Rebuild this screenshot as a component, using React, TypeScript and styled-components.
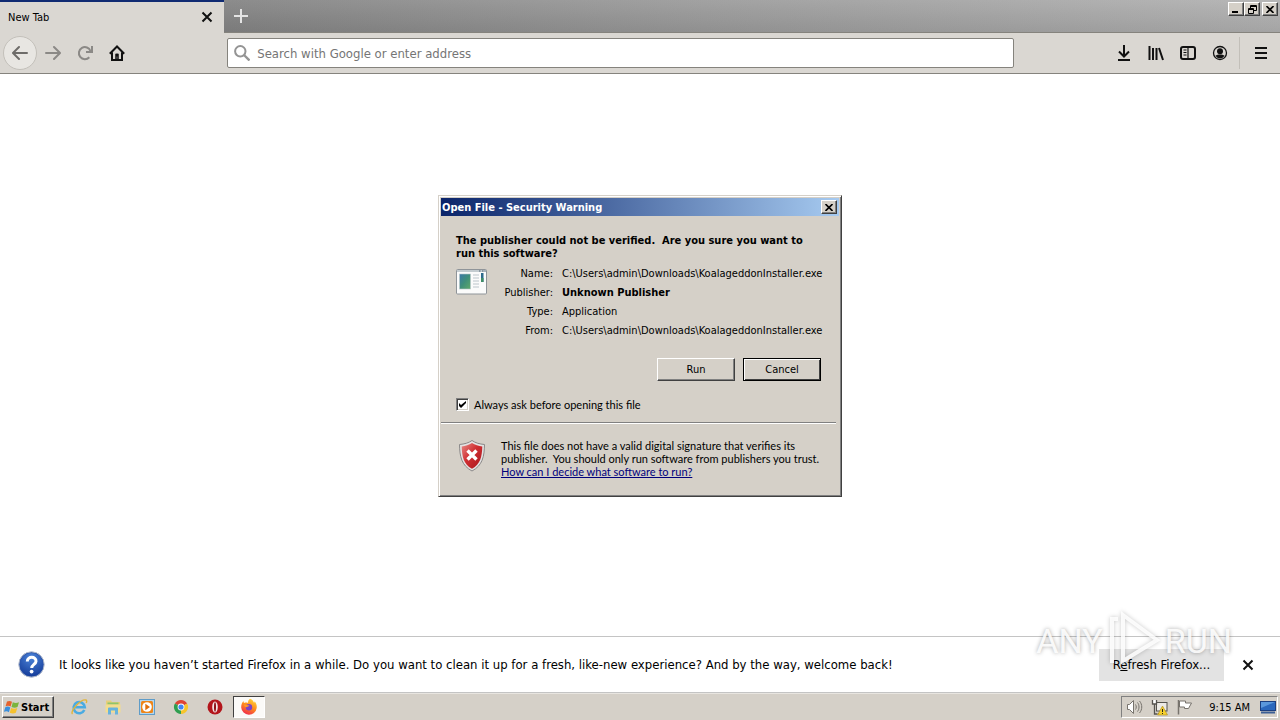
import React from "react";
import styled, { createGlobalStyle, css } from "styled-components";

const ui = '"DejaVu Sans Condensed", "DejaVu Sans", sans-serif';
const narrow = 'Lato, Arial, sans-serif';
const face = "#d5d0c8";
const ink = "#111";

const GlobalStyle = createGlobalStyle`
  * { box-sizing: border-box; }
  body { margin: 0; background: #fff; color: #000; font-family: ${ui}; font-size: 11px; }
  button, input { font: inherit; color: inherit; margin: 0; padding: 0; }
  h1, h2, p, dl, dd { margin: 0; }
  svg { display: block; flex: none; }
`;

const raised = css`
  border: 1px solid;
  border-color: #fff #404040 #404040 #fff;
  box-shadow: inset -1px -1px #808080;
  background: ${face};
`;

const Screen = styled.div`
  position: relative;
  display: flex;
  flex-direction: column;
  min-height: 100vh;
`;

const TabStrip = styled.header`
  display: flex;
  align-items: flex-start;
  height: 33px;
  background:
    linear-gradient(rgba(255, 255, 255, 0.06), rgba(0, 0, 0, 0.08)),
    linear-gradient(90deg, #858585 18%, #9c9c9c 55%, #b2b2b2 100%);
  border-bottom: 1px solid #85837d;
`;

const Tab = styled.div`
  display: flex;
  align-items: center;
  justify-content: space-between;
  width: 224px;
  height: 33px;
  padding: 0 9px 1px 8px;
  border-top: 2px solid #0f2a72;
  background: #dad7d2;
`;

const PlainButton = styled.button<{ $w?: number; $h?: number }>`
  display: flex;
  align-items: center;
  justify-content: center;
  flex: none;
  width: ${(p) => p.$w ?? 32}px;
  height: ${(p) => p.$h ?? 32}px;
  border: 0;
  background: none;
  color: ${ink};
`;

const WindowButtons = styled.div`
  display: flex;
  margin: 2px 2px 0 auto;
`;

const BevelButton = styled.button<{ $gap?: boolean }>`
  ${raised}
  display: flex;
  align-items: center;
  justify-content: center;
  width: 16px;
  height: 14px;
  margin-left: ${(p) => (p.$gap ? 2 : 0)}px;
`;

const Toolbar = styled.nav`
  display: flex;
  align-items: center;
  height: 41px;
  padding: 0 3px;
  background: #dad7d2;
  border-bottom: 1px solid #85837d;
`;

const BackButton = styled(PlainButton)`
  border: 1px solid #c3c0ba;
  border-radius: 50%;
  background: #e8e6e2;
  color: #6e6c69;
`;

const Spacer = styled.div`
  flex: 96 1 0;
`;

const UrlBar = styled.label`
  display: flex;
  align-items: center;
  gap: 7px;
  flex: 787 1 0;
  height: 30px;
  padding: 0 6px;
  border: 1px solid #85837d;
  border-radius: 2px;
  background: #fff;
  color: #949494;
`;

const UrlInput = styled.input`
  flex: 1;
  min-width: 0;
  border: 0;
  outline: 0;
  background: none;
  font-size: 13px;
  &::placeholder { color: #757575; opacity: 1; }
`;

const ToolSeparator = styled.div`
  width: 1px;
  height: 32px;
  margin: 0 5px 0 3px;
  background: #c2bfb9;
`;

const Page = styled.main`
  display: flex;
  flex: 1;
  align-items: center;
  justify-content: center;
  padding-bottom: 18px;
`;

const Dialog = styled.section`
  width: 404px;
  max-width: 100%;
  padding: 1px;
  border: 1px solid;
  border-color: #d5d0c8 #404040 #404040 #d5d0c8;
  box-shadow: inset 1px 1px #fff, inset -1px -1px #808080;
  background: ${face};
  line-height: 13px;
`;

const TitleBar = styled.div`
  display: flex;
  align-items: center;
  justify-content: space-between;
  height: 18px;
  margin: 1px;
  padding: 0 2px 0 1px;
  background: linear-gradient(90deg, #0a246a, #a6caf0);
  color: #fff;
`;

const Title = styled.h1`
  font-size: 11px;
  font-weight: bold;
`;

const DialogBody = styled.div`
  padding: 17px 19px 10px 16px;
`;

const Question = styled.h2`
  font-size: 11px;
  font-weight: bold;
  line-height: 13px;
  white-space: pre-wrap;
`;

const Details = styled.div`
  display: flex;
  gap: 14px;
  margin-top: 7px;
`;

const DetailList = styled.dl`
  display: grid;
  grid-template-columns: 52px auto;
  gap: 6px 9px;
`;

const Term = styled.dt`
  text-align: right;
`;

const Value = styled.dd<{ $bold?: boolean }>`
  font-weight: ${(p) => (p.$bold ? "bold" : "normal")};
  white-space: nowrap;
`;

const Actions = styled.div`
  display: flex;
  justify-content: flex-end;
  gap: 8px;
  margin-top: 21px;
`;

const DialogButton = styled.button<{ $primary?: boolean }>`
  ${raised}
  width: 78px;
  height: 23px;
  ${(p) =>
    p.$primary &&
    css`
      border-color: #000;
      box-shadow: inset 1px 1px #fff, inset -1px -1px #404040;
    `}
`;

const AskRow = styled.label`
  display: flex;
  align-items: center;
  gap: 5px;
  margin-top: 17px;
  font-family: ${narrow};
`;

const CheckWrap = styled.span`
  display: grid;
  & > * { grid-area: 1 / 1; }
  & > svg { place-self: center; pointer-events: none; }
  & > input:not(:checked) + svg { visibility: hidden; }
`;

const CheckBox = styled.input`
  appearance: none;
  width: 13px;
  height: 13px;
  border: 1px solid;
  border-color: #808080 #fff #fff #808080;
  box-shadow: inset 1px 1px #404040, inset -1px -1px #d5d0c8;
  background: #fff;
`;

const DialogFooter = styled.div`
  display: flex;
  gap: 15px;
  margin: 1px 4px 0 1px;
  padding: 16px 8px 17px 17px;
  border-top: 1px solid #808080;
  box-shadow: inset 0 1px #fff;
`;

const Advice = styled.p`
  font-family: ${narrow};
  white-space: pre-wrap;
`;

const HelpLink = styled.a`
  color: #00007c;
`;

const Notice = styled.aside`
  display: flex;
  align-items: center;
  height: 57px;
  padding: 0 16px 0 18px;
  border-top: 1px solid #c4c4c4;
  border-bottom: 1px solid #c4c4c4;
  font-size: 13px;
`;

const NoticeText = styled.p`
  flex: 1;
  margin-left: 14px;
`;

const RefreshButton = styled.button`
  width: 125px;
  height: 32px;
  margin-right: 8px;
  border: 0;
  background: #e3e3e3;
`;

const Watermark = styled.div`
  position: absolute;
  right: 48px;
  bottom: 46px;
  display: flex;
  align-items: center;
  gap: 3px;
  height: 66px;
  color: rgba(255, 255, 255, 0.9);
  font: 34px Roboto, sans-serif;
  text-shadow: 0 0 4px rgba(0, 0, 0, 0.35);
  pointer-events: none;
  & > svg { filter: drop-shadow(0 0 2px rgba(0, 0, 0, 0.25)); }
`;

const Taskbar = styled.footer`
  display: flex;
  align-items: center;
  height: 27px;
  padding: 0 2px;
  background: ${face};
  border-top: 1px solid #e8e5e0;
`;

const StartButton = styled.button`
  ${raised}
  display: flex;
  align-items: center;
  gap: 1px;
  width: 52px;
  height: 22px;
  margin-right: 8px;
  padding-left: 1px;
  font-weight: bold;
`;

const TaskButton = styled(PlainButton)<{ $active?: boolean }>`
  ${(p) =>
    p.$active &&
    css`
      border: 1px solid;
      border-color: #404040 #fff #fff #404040;
      background: #fbfaf8;
    `}
`;

const Tasks = styled.div`
  display: flex;
  gap: 2px;
  margin-left: 1px;
`;

const Tray = styled.div`
  display: flex;
  align-items: center;
  gap: 8px;
  height: 22px;
  margin-left: auto;
  padding: 0 1px 0 4px;
  border: 1px solid;
  border-color: #808080 #fff #fff #808080;
`;

const Clock = styled.time`
  margin: 0 2px 0 8px;
`;

const Ico = ({ s = 16, children }: { s?: number; children: React.ReactNode }) => (
  <svg width={s} height={s} viewBox="0 0 16 16" fill="none" stroke="currentColor" strokeWidth="2" aria-hidden="true">
    {children}
  </svg>
);

const CloseIcon = () => (
  <svg width="12" height="12" viewBox="0 0 12 12" stroke="currentColor" strokeWidth="2" aria-hidden="true">
    <path d="M1.500 1.500l9 9M10.500 1.500l-9 9" />
  </svg>
);

const SmallX = () => (
  <svg width="8" height="7" viewBox="0 0 8 7" stroke="#000" strokeWidth="1.600" aria-hidden="true">
    <path d="M.5 0l7 7M7.500 0l-7 7" />
  </svg>
);

const AppFileIcon = () => (
  <svg width="31" height="28" viewBox="0 0 31 28" aria-hidden="true">
    <defs>
      <linearGradient id="pic" x1="0" y1="0" x2="1" y2="1">
        <stop offset="0" stopColor="#3c78a8" />
        <stop offset=".5" stopColor="#3f8f7a" />
        <stop offset="1" stopColor="#5fa96a" />
      </linearGradient>
    </defs>
    <rect x=".5" y="2.500" width="30" height="24.500" rx="1" fill="#fbfbfb" stroke="#8f9499" />
    <path d="M1 4h29" stroke="#c4ccd0" strokeWidth="2" />
    <path d="M23 4h1.500M26 4h1.500M28.500 4h1" stroke="#567" strokeWidth="1.200" />
    <rect x="3.500" y="7" width="11" height="15" fill="url(#pic)" stroke="#b9c6cc" strokeWidth=".6" />
    <path d="M17 8h6M17 11h6M17 14h6M17 17h6M17 20h6" stroke="#bcc5cb" />
    <rect x="25" y="6" width="2.500" height="9" fill="#2f6b8c" />
    <path d="M25 11h2.500v4H25z" fill="#3e8c67" />
  </svg>
);

const ShieldIcon = () => (
  <svg width="28" height="34" viewBox="0 0 28 34" aria-hidden="true">
    <defs>
      <linearGradient id="shield" x1="0" y1="0" x2="1" y2="1">
        <stop offset="0" stopColor="#e98a86" />
        <stop offset=".45" stopColor="#cf2f32" />
        <stop offset="1" stopColor="#a8141c" />
      </linearGradient>
    </defs>
    <path d="M14 1.500c3.500 2.500 7.500 3.500 12.500 4-.2 12-2 21-12.500 26.500C3.500 26.500 1.700 17.500 1.500 5.500c5-.5 9-1.500 12.500-4z" fill="#e4e2e2" stroke="#8a8888" />
    <path d="M14 4c3 2 6.500 3 10.300 3.400C24 17.500 22.500 25 14 29.800 5.500 25 4 17.500 3.700 7.400 7.500 7 11 6 14 4z" fill="url(#shield)" />
    <path d="M9.500 11.500l9 9M18.500 11.500l-9 9" stroke="#fff" strokeWidth="3.400" />
  </svg>
);

const HelpIcon = () => (
  <svg width="27" height="27" viewBox="0 0 27 27" aria-hidden="true">
    <defs>
      <radialGradient id="help" cx=".5" cy=".2" r=".8">
        <stop offset="0" stopColor="#4b83d8" />
        <stop offset="1" stopColor="#173f9c" />
      </radialGradient>
    </defs>
    <circle cx="13.500" cy="13.500" r="12.700" fill="#2a52a8" stroke="#b4bccb" />
    <circle cx="13.500" cy="13.500" r="11.500" fill="url(#help)" />
    <path d="M9.300 10.500c0-5.500 9-5.500 8.700-.2-.2 3-4.300 3.200-4.300 6.700" fill="none" stroke="#fff" strokeWidth="3" />
    <circle cx="13.600" cy="20.600" r="1.900" fill="#fff" />
  </svg>
);

const WindowsFlag = () => (
  <svg width="16" height="16" viewBox="0 0 16 16" aria-hidden="true">
    <path d="M3 2.500c2-1 3.500-.7 5 .3L6.600 7.500c-1.500-1-3-1.200-5-.3z" fill="#e5622c" />
    <path d="M8.800 3.200c2 1 4 1 6.200 0L13.500 8c-2 1-4 .8-6 0z" fill="#7bb43c" />
    <path d="M1.300 8.200c2-1 3.500-.7 5 .3L4.900 13.200c-1.500-1-3-1.200-5-.3z" fill="#3a8fdc" />
    <path d="M7.100 9c2 1 4 1 6.200 0l-1.500 4.700c-2 1-4 .8-6 0z" fill="#f5c12e" />
  </svg>
);

const IeIcon = () => (
  <svg width="18" height="18" viewBox="0 0 18 18" fill="none" aria-hidden="true">
    <path d="M14.300 12A5.600 5.600 0 1 1 14.800 9.300H5" stroke="#4aabe2" strokeWidth="2.600" />
    <path d="M2.500 16C-.5 13.500 11 .5 16 2c1 .4.800 1.800.2 3" stroke="#e2b53a" strokeWidth="1.400" />
  </svg>
);

const FolderIcon = () => (
  <svg width="18" height="18" viewBox="0 0 18 18" aria-hidden="true">
    <path d="M2 2.500h5l1 1.500h8V13H2z" fill="#e8cf7a" />
    <path d="M3.500 4.500h11v2h-11z" fill="#8fc46a" />
    <path d="M1.500 6.500h15v8h-15z" fill="#f3dd8e" />
    <path d="M4 16.500V10.500q0-1 1-1h8q1 0 1 1v6h-3v-4H7v4z" fill="#68b3dc" />
  </svg>
);

const PlayerIcon = () => (
  <svg width="18" height="18" viewBox="0 0 18 18" aria-hidden="true">
    <rect x="1.500" y="1.500" width="15" height="15" fill="#b4d6ee" stroke="#5f9cc8" />
    <rect x="3" y="3" width="12" height="12" rx="1.500" fill="#ee8519" />
    <circle cx="9" cy="9" r="4.800" fill="#fff" />
    <path d="M7.300 5.800l4.700 3.200-4.700 3.200z" fill="#e06f0c" />
  </svg>
);

const ChromeIcon = () => (
  <svg width="16" height="16" viewBox="0 0 16 16" aria-hidden="true">
    <path d="M8 8L1.900 4.500A7 7 0 0 1 14.100 4.500z" fill="#df4335" />
    <path d="M8 8l6.100-3.500A7 7 0 0 1 8 15z" fill="#f7c52c" />
    <path d="M8 8v7A7 7 0 0 1 1.900 4.500z" fill="#2f9e50" />
    <circle cx="8" cy="8" r="3.400" fill="#fff" />
    <circle cx="8" cy="8" r="2.600" fill="#4285f4" />
  </svg>
);

const OperaIcon = () => (
  <svg width="16" height="16" viewBox="0 0 16 16" aria-hidden="true">
    <circle cx="8" cy="8" r="7.500" fill="#b3151b" />
    <ellipse cx="8" cy="8" rx="2.800" ry="5.600" fill="#f3e4e4" />
    <ellipse cx="8" cy="8" rx="1" ry="4.700" fill="#8d1015" />
  </svg>
);

const FirefoxIcon = () => (
  <svg width="18" height="18" viewBox="0 0 18 18" aria-hidden="true">
    <defs>
      <linearGradient id="fox" x1=".8" y1="0" x2=".3" y2="1">
        <stop offset="0" stopColor="#ffd93a" />
        <stop offset=".5" stopColor="#ff8a1c" />
        <stop offset="1" stopColor="#f0294f" />
      </linearGradient>
    </defs>
    <path d="M10 .8c2.500 1 3.500 2.500 4 4 .6-.3.600-1 .5-1.500 2 2.200 2.500 4.500 2.200 6.700A7.800 7.800 0 0 1 1.200 9.500C1.200 6.500 2 4.500 3.500 3c0 1 .2 1.500.6 2C5.500 4.300 7 4.500 8 5c0-2 .8-3.500 2-4.200z" fill="url(#fox)" />
    <circle cx="9" cy="9.300" r="3.200" fill="#7a42c8" />
    <path d="M4 6.500c2 .2 3 .8 5.500 1-1 1.500-3 1-3.500 2-1-.5-2-1.500-2-3z" fill="#ff9a25" />
  </svg>
);

const SpeakerIcon = () => (
  <svg width="17" height="16" viewBox="0 0 17 16" fill="none" stroke="#77736d" aria-hidden="true">
    <path d="M1.500 5.500h2l4-4v13l-4-4h-2z" fill="#fff" />
    <path d="M9.500 5.500c1 1.500 1 3.500 0 5M11.500 3.500c2 2.500 2 6.500 0 9M13.500 2c3 3.500 3 8.500 0 12" />
  </svg>
);

const NetworkIcon = () => (
  <svg width="17" height="17" viewBox="0 0 17 17" aria-hidden="true">
    <rect x="5.500" y="3.500" width="10.500" height="8.500" fill="#eceae6" stroke="#55534f" />
    <path d="M7 14.500h8" stroke="#55534f" />
    <path d="M1.500 1v4h4V1z" fill="#fff" />
    <path d="M1.500 1v4h4V1M3.500 5v10h3" fill="none" stroke="#55534f" strokeWidth="1.300" />
    <path d="M11.500 7l5 9h-10z" fill="#f6d02c" stroke="#a8861a" strokeWidth=".6" />
    <path d="M11.500 10v3M11.500 14v1" stroke="#222" />
  </svg>
);

const FlagIcon = () => (
  <svg width="17" height="16" viewBox="0 0 17 16" fill="#fff" stroke="#77736d" aria-hidden="true">
    <path d="M3.500 2h6v2h6l-3 5.500h-4v-1.500h-5z" />
    <path d="M2.500 1v14.500" strokeWidth="1.500" />
  </svg>
);

const DesktopIcon = () => (
  <svg width="16" height="14" viewBox="0 0 16 14" aria-hidden="true">
    <rect x=".5" y="1.500" width="15" height="9" fill="#2b68bd" stroke="#1c3f80" />
    <path d="M1 2h14L1 8z" fill="#5b98dc" />
    <path d="M1 12.500h14" stroke="#3c5f95" strokeWidth="2" />
  </svg>
);

const forwardPath =
  "M8.293 1.293a1 1 0 0 1 1.414 0l6 6a1 1 0 0 1 0 1.414l-6 6a1 1 0 0 1-1.414-1.414L12.586 9H1a1 1 0 0 1 0-2h11.586L8.293 2.707a1 1 0 0 1 0-1.414z";
const backPath =
  "M7.707 1.293a1 1 0 0 0-1.414 0l-6 6a1 1 0 0 0 0 1.414l6 6a1 1 0 0 0 1.414-1.414L3.414 9H15a1 1 0 0 0 0-2H3.414l4.293-4.293a1 1 0 0 0 0-1.414z";

const DimButton = styled(PlainButton)`
  color: #8b8986;
`;

const details = [
  { term: "Name:", value: "C:\\Users\\admin\\Downloads\\KoalageddonInstaller.exe" },
  { term: "Publisher:", value: "Unknown Publisher", bold: true },
  { term: "Type:", value: "Application" },
  { term: "From:", value: "C:\\Users\\admin\\Downloads\\KoalageddonInstaller.exe" },
];

const tasks = [
  { name: "Internet Explorer", icon: <IeIcon /> },
  { name: "Explorer", icon: <FolderIcon /> },
  { name: "Media Player", icon: <PlayerIcon /> },
  { name: "Chrome", icon: <ChromeIcon /> },
  { name: "Opera", icon: <OperaIcon /> },
  { name: "Firefox", icon: <FirefoxIcon />, active: true },
];

export default function App() {
  return (
    <Screen>
      <GlobalStyle />
      <TabStrip>
        <Tab>
          <span>New Tab</span>
          <PlainButton $w={16} $h={16} aria-label="Close tab"><CloseIcon /></PlainButton>
        </Tab>
        <PlainButton $w={34} aria-label="Open a new tab">
          <svg width="14" height="14" viewBox="0 0 14 14" stroke="#e4e4e4" strokeWidth="2" aria-hidden="true">
            <path d="M7 0v14M0 7h14" />
          </svg>
        </PlainButton>
        <WindowButtons>
          <BevelButton aria-label="Minimize">
            <svg width="8" height="8" aria-hidden="true"><path d="M0 6h6v2H0z" /></svg>
          </BevelButton>
          <BevelButton aria-label="Restore">
            <svg width="9" height="9" fill="none" stroke="#000" aria-hidden="true">
              <path d="M2.500 3V.5h6v5H6M2 1.500h7M.5 3.500h5v5h-5zM0 4.500h6" />
            </svg>
          </BevelButton>
          <BevelButton $gap aria-label="Close"><SmallX /></BevelButton>
        </WindowButtons>
      </TabStrip>

      <Toolbar>
        <BackButton $w={34} $h={34} aria-label="Back">
          <Ico><path d={backPath} fill="currentColor" stroke="none" /></Ico>
        </BackButton>
        <DimButton aria-label="Forward">
          <Ico><path d={forwardPath} fill="currentColor" stroke="none" /></Ico>
        </DimButton>
        <DimButton aria-label="Reload">
          <Ico>
            <path d="M12.300 12.200A6 6 0 1 1 13.500 6" />
            <path d="M15 1v6H9" />
          </Ico>
        </DimButton>
        <PlainButton aria-label="Home">
          <Ico>
            <path d="M.8 8.700L8 1.500l7.200 7.200M3 7.500V15h10V7.500" />
            <path d="M8 8.500v3M7 9.500h2v5H7z" strokeWidth="1.500" />
          </Ico>
        </PlainButton>
        <Spacer />
        <UrlBar>
          <Ico><circle cx="6.300" cy="6.300" r="5.200" /><path d="M10 10l5.500 5.500" strokeWidth="2.400" /></Ico>
          <UrlInput type="text" placeholder="Search with Google or enter address" aria-label="Address" />
        </UrlBar>
        <Spacer />
        <PlainButton aria-label="Downloads">
          <Ico><path d="M8 0v11M3 6.500l5 5 5-5M2 15h12" /></Ico>
        </PlainButton>
        <PlainButton aria-label="Library">
          <Ico><path d="M1.500 1v14M5 3v12M8.500 3v12M11 3l4 12" /></Ico>
        </PlainButton>
        <PlainButton aria-label="Sidebars">
          <Ico>
            <rect x="1" y="2" width="14" height="12" rx="2" />
            <path d="M8 2v12M3.500 5h3M3.500 7.500h3M3.500 10h3" strokeWidth="1.200" />
          </Ico>
        </PlainButton>
        <PlainButton aria-label="Account">
          <Ico>
            <circle cx="8" cy="8" r="6.500" strokeWidth="1.300" />
            <circle cx="8" cy="6.200" r="3" fill="currentColor" stroke="none" />
            <path d="M3.500 10.500c2-1.500 7-1.500 9 0-1 2-2.500 2.800-4.500 2.800s-3.500-.8-4.500-2.800z" fill="currentColor" stroke="none" />
          </Ico>
        </PlainButton>
        <ToolSeparator />
        <PlainButton aria-label="Menu">
          <Ico><path d="M2 3h12M2 8h12M2 13h12" /></Ico>
        </PlainButton>
      </Toolbar>

      <Page>
        <Dialog role="dialog" aria-labelledby="warning-title">
          <TitleBar>
            <Title id="warning-title">Open File - Security Warning</Title>
            <BevelButton aria-label="Close dialog"><SmallX /></BevelButton>
          </TitleBar>
          <DialogBody>
            <Question>{"The publisher could not be verified.  Are you sure you want to\nrun this software?"}</Question>
            <Details>
              <AppFileIcon />
              <DetailList>
                {details.map((d) => (
                  <React.Fragment key={d.term}>
                    <Term>{d.term}</Term>
                    <Value $bold={d.bold}>{d.value}</Value>
                  </React.Fragment>
                ))}
              </DetailList>
            </Details>
            <Actions>
              <DialogButton>Run</DialogButton>
              <DialogButton $primary>Cancel</DialogButton>
            </Actions>
            <AskRow>
              <CheckWrap>
                <CheckBox type="checkbox" defaultChecked />
                <svg width="7" height="7" viewBox="0 0 7 7" aria-hidden="true">
                  <path d="M0 2v3l2 2 5-5V0L2 4z" />
                </svg>
              </CheckWrap>
              Always ask before opening this file
            </AskRow>
          </DialogBody>
          <DialogFooter>
            <ShieldIcon />
            <Advice>
              {"This file does not have a valid digital signature that verifies its\npublisher.  You should only run software from publishers you trust.\n"}
              <HelpLink href="#help">How can I decide what software to run?</HelpLink>
            </Advice>
          </DialogFooter>
        </Dialog>
      </Page>

      <Notice>
        <HelpIcon />
        <NoticeText>
          It looks like you haven’t started Firefox in a while. Do you want to clean it up for a fresh, like-new
          experience? And by the way, welcome back!
        </NoticeText>
        <RefreshButton>R<u>e</u>fresh Firefox...</RefreshButton>
        <PlainButton aria-label="Dismiss"><CloseIcon /></PlainButton>
      </Notice>

      <Taskbar>
        <StartButton><WindowsFlag />Start</StartButton>
        <Tasks>
          {tasks.map((t) => (
            <TaskButton key={t.name} $h={22} $active={t.active} aria-label={t.name}>{t.icon}</TaskButton>
          ))}
        </Tasks>
        <Tray>
          <SpeakerIcon />
          <NetworkIcon />
          <FlagIcon />
          <Clock>9:15 AM</Clock>
          <DesktopIcon />
        </Tray>
      </Taskbar>

      <Watermark aria-hidden="true">
        <span>ANY</span>
        <svg width="56" height="62" viewBox="0 0 56 62" fill="none" stroke="rgba(255,255,255,.85)" strokeWidth="4">
          <path d="M17 5l34 25-34 21V5z" />
          <path d="M12 9H6v44" />
        </svg>
        <span>RUN</span>
      </Watermark>
    </Screen>
  );
}
